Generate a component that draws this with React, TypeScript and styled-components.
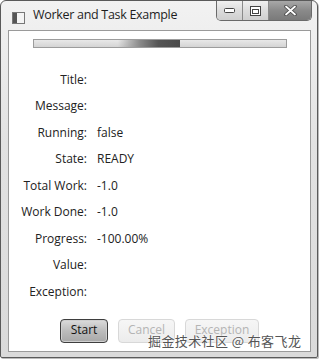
import styled, { createGlobalStyle } from "styled-components";

const GlobalStyle = createGlobalStyle`
  html, body {
    margin: 0;
    padding: 0;
    background: #ffffff;
  }
  body {
    font-family: "Open Sans", "Noto Sans", sans-serif;
  }
`;

const Page = styled.div`
  width: 320px;
  height: 361px;
  position: relative;
  overflow: hidden;
`;

const Window = styled.div`
  width: 316px;
  height: 356px;
  border: 1px solid #5a5a5a;
  border-radius: 6px 6px 2px 2px;
  background: linear-gradient(180deg, #f2f2f2 0%, #e2e2e2 40%, #dadada 100%);
  display: flex;
  flex-direction: column;
  box-shadow: 1px 1px 0 #bbb;
`;

const TitleBar = styled.div`
  height: 29px;
  display: flex;
  align-items: flex-start;
`;

const AppIcon = styled.div`
  width: 11px;
  height: 10px;
  margin: 11px 0 0 11px;
  border: 1px solid #777;
  background: linear-gradient(90deg, #555 0 40%, #f4f4f4 40% 100%);
`;

const Caption = styled.div`
  margin: 5px 0 0 8px;
  font-family: "Open Sans", sans-serif;
  font-size: 12.5px;
  color: #1e1e1e;
  letter-spacing: -0.3px;
`;

const Controls = styled.div`
  margin-left: auto;
  margin-right: 5px;
  display: flex;
  height: 19px;
  border: 1px solid #6a6a6a;
  border-top: none;
  border-radius: 0 0 5px 5px;
  overflow: hidden;
`;

const CtrlButton = styled.div<{ $wide?: boolean; $dark?: boolean; $first?: boolean }>`
  width: ${(p) => (p.$wide ? 42 : 25)}px;
  display: flex;
  align-items: center;
  justify-content: center;
  background: ${(p) =>
    p.$dark
      ? "linear-gradient(180deg, #a8a8a8 0%, #8a8a8a 50%, #7a7a7a 100%)"
      : "linear-gradient(180deg, #f0f0f0 0%, #dcdcdc 50%, #cfcfcf 100%)"};
  border-left: ${(p) => (p.$first ? "none" : "1px solid #8a8a8a")};
`;

const Content = styled.div`
  margin: 0 6px 0 7px;
  height: 320px;
  border: 1px solid #9a9a9a;
  background: #ffffff;
  display: flex;
  flex-direction: column;
  align-items: center;
`;

const Progress = styled.div`
  margin-top: 8px;
  width: 252px;
  height: 7px;
  border: 1px solid #9c9c9c;
  background: linear-gradient(180deg, #e8e8e8 0%, #d4d4d4 100%);
  display: flex;
`;

const ProgressGlow = styled.div`
  margin-left: 84px;
  width: 62px;
  height: 100%;
  background: linear-gradient(90deg, rgba(90, 90, 90, 0) 0%, #8a8a8a 35%, #555 65%, #4a4a4a 100%);
`;

const Form = styled.div`
  margin-top: 18px;
  align-self: stretch;
  display: grid;
  grid-template-columns: 78px 1fr;
  grid-auto-rows: 26.5px;
  column-gap: 10px;
  align-items: center;
`;

const Label = styled.div`
  text-align: right;
  font-size: 12px;
  color: #222;
`;

const Value = styled.div`
  font-size: 12px;
  color: #222;
`;

const ButtonRow = styled.div`
  margin-top: 14px;
  display: flex;
  gap: 10px;
`;

const Button = styled.div<{ $w: number; $disabled?: boolean; $focused?: boolean }>`
  width: ${(p) => p.$w}px;
  height: 24px;
  box-sizing: border-box;
  border-radius: 4px;
  display: flex;
  align-items: center;
  justify-content: center;
  font-size: 12px;
  line-height: 14px;
  padding-bottom: 2px;
  color: ${(p) => (p.$disabled ? "#b4b4b4" : "#111")};
  border: 1px solid ${(p) => (p.$focused ? "#3e3e3e" : p.$disabled ? "#d8d8d8" : "#888")};
  background: ${(p) =>
    p.$disabled
      ? "linear-gradient(180deg, #f6f6f6 0%, #ececec 100%)"
      : "linear-gradient(180deg, #dcdcdc 0%, #bcbcbc 50%, #a8a8a8 100%)"};
  box-shadow: ${(p) => (p.$focused ? "inset 0 0 0 1px #cfcfcf" : "none")};
`;

const Watermark = styled.div`
  position: absolute;
  left: 148px;
  top: 334px;
  font-family: "Noto Sans CJK SC", sans-serif;
  font-size: 13px;
  line-height: 13px;
  color: #555;
  letter-spacing: 0.4px;
  text-shadow: 0 0 2px #fff, 0 0 2px #fff;
  white-space: nowrap;
`;

const rows: [string, string][] = [
  ["Title:", ""],
  ["Message:", ""],
  ["Running:", "false"],
  ["State:", "READY"],
  ["Total Work:", "-1.0"],
  ["Work Done:", "-1.0"],
  ["Progress:", "-100.00%"],
  ["Value:", ""],
  ["Exception:", ""],
];

export default function App() {
  return (
    <Page>
      <GlobalStyle />
      <Window>
        <TitleBar>
          <AppIcon />
          <Caption>Worker and Task Example</Caption>
          <Controls>
            <CtrlButton $first>
              <svg width="11" height="5" viewBox="0 0 11 5">
                <rect x="0.5" y="0.5" width="10" height="4" rx="1" fill="#fff" stroke="#444" />
              </svg>
            </CtrlButton>
            <CtrlButton>
              <svg width="11" height="10" viewBox="0 0 11 10">
                <rect x="0.5" y="0.5" width="10" height="9" fill="#fff" stroke="#444" />
                <rect x="2.5" y="3.5" width="6" height="4" fill="#fff" stroke="#444" />
              </svg>
            </CtrlButton>
            <CtrlButton $wide $dark>
              <svg width="13" height="11" viewBox="0 0 13 11">
                <path d="M2 1.5 L11 9.5 M11 1.5 L2 9.5" stroke="#444" strokeWidth="3.4" strokeLinecap="round" />
                <path d="M2 1.5 L11 9.5 M11 1.5 L2 9.5" stroke="#fff" strokeWidth="1.8" strokeLinecap="round" />
              </svg>
            </CtrlButton>
          </Controls>
        </TitleBar>
        <Content>
          <Progress>
            <ProgressGlow />
          </Progress>
          <Form>
            {rows.flatMap(([l, v]) => [
              <Label key={l}>{l}</Label>,
              <Value key={l + "v"}>{v}</Value>,
            ])}
          </Form>
          <ButtonRow>
            <Button $w={48} $focused>Start</Button>
            <Button $w={57} $disabled>Cancel</Button>
            <Button $w={74} $disabled>Exception</Button>
          </ButtonRow>
        </Content>
      </Window>
      <Watermark>掘金技术社区 @ 布客飞龙</Watermark>
    </Page>
  );
}
